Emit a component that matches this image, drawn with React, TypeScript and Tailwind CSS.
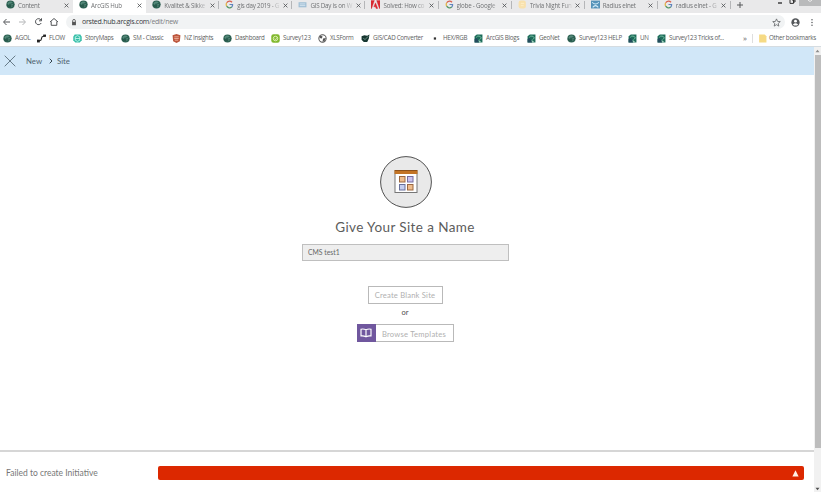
import React from 'react';

type IconKind = 'globe' | 'google' | 'flow' | 'story' | 'nz' | 'survey' | 'xls' | 'cad' | 'dot' | 'blog' | 'adobe' | 'page' | 'trivia' | 'radius' | 'folder';

function SiteIcon({ kind }: { kind: IconKind }) {
  return (
    <svg viewBox="0 0 16 16" className="h-[9px] w-[9px] shrink-0">
      {kind === 'globe' && (
        <g>
          <circle cx="8" cy="8" r="7.3" fill="#2c6152" />
          <path d="M2.5 6C5 2 9 2 12 4L9 6 6 6 5 9ZM9 8L13 7 12 11 9 13Z" fill="#55897a" />
          <path d="M1 9.5C6 12 11 11 15 8" stroke="#204b41" strokeWidth="1" fill="none" />
        </g>
      )}
      {kind === 'google' && (
        <g fill="none" strokeWidth="2.2">
          <path d="M12.5 4A5.7 5.7 0 0 0 3 5" stroke="#d9604f" />
          <path d="M3 5A6 6 0 0 0 3 11" stroke="#e3b244" />
          <path d="M3 11A6 6 0 0 0 12 12.5" stroke="#559767" />
          <path d="M12 12.5A6 6 0 0 0 13.5 8H8" stroke="#5f83bd" />
        </g>
      )}
      {kind === 'flow' && (
        <g fill="#222">
          <path d="M2 13L7 11 9 5 14 3" fill="none" stroke="#222" strokeWidth="2" />
          <rect x="0" y="10" width="5" height="5" />
          <rect x="11" y="1" width="5" height="4" />
        </g>
      )}
      {kind === 'story' && (
        <g>
          <path d="M3 1H13L15.5 5V11L12 15H4L.5 11V5Z" fill="#35bda7" />
          <path d="M4 5L8 3 12 5V11L8 13 4 11ZM4 8H12" fill="none" stroke="#d9fff5" strokeWidth="1.3" />
        </g>
      )}
      {kind === 'nz' && (
        <g>
          <path d="M1 2L8 0 15 2 14 13 8 16 2 13Z" fill="#bc553c" />
          <path d="M4 5H12M4 8H12M5 11H11" stroke="#f1b49e" strokeWidth="1.5" />
        </g>
      )}
      {kind === 'survey' && (
        <g>
          <rect x=".5" y=".5" width="15" height="15" rx="4" fill="#81b82e" />
          <circle cx="8" cy="8" r="4" fill="none" stroke="#eaf8c9" strokeWidth="1.5" />
          <path d="M6 8L8 10 11 6" fill="none" stroke="#eaf8c9" strokeWidth="1.3" />
        </g>
      )}
      {kind === 'xls' && (
        <g>
          <circle cx="8" cy="8" r="6.5" fill="#fff" stroke="#555" strokeWidth="1.8" />
          <path d="M3 3L8 4 7 8 3 7ZM9 8L14 7 12 12 8 14Z" fill="#555" />
        </g>
      )}
      {kind === 'cad' && (
        <g>
          <path d="M1 4L6 2 11 3 15 1 14 8 11 14 5 14 1 10Z" fill="#173731" />
          <path d="M4 7L7 10 13 4" fill="none" stroke="#8bb0a0" strokeWidth="1.3" />
        </g>
      )}
      {kind === 'dot' && <rect x="5" y="6" width="4" height="4" fill="#333" />}
      {kind === 'blog' && (
        <g>
          <path d="M1 4L5 1H15V15H1Z" fill="#1d6c5a" />
          <path d="M4 6A5 5 0 0 1 13 7L10 10" fill="none" stroke="#79c2a4" strokeWidth="1.6" />
          <path d="M1 9L5 7 9 15H1Z" fill="#234b5d" />
          <path d="M8 10L14 15H9Z" fill="#a5d2c0" />
        </g>
      )}
      {kind === 'adobe' && <path d="M0 1H6L1 15H0ZM10 1H16V15H15ZM8 5L12 15H9L8 12H5Z" fill="#d92831" stroke="#d92831" strokeWidth=".7" />}
      {kind === 'page' && (
        <g>
          <rect x="1" y="4" width="14" height="9" fill="#9fbed4" />
          <path d="M3 7H13M3 10H13" stroke="#e1edf5" strokeWidth="1.4" />
        </g>
      )}
      {kind === 'trivia' && (
        <g>
          <rect x="1" y="1" width="13" height="14" rx="4" fill="#f8e1ad" />
          <path d="M5 6H11M5 10H10" stroke="#fff0c8" strokeWidth="1.5" />
        </g>
      )}
      {kind === 'radius' && (
        <g>
          <rect x="0" y="1" width="16" height="14" fill="#5492b8" />
          <path d="M2 4Q8 10 14 4M3 13Q8 7 13 13" fill="none" stroke="#d4edfa" strokeWidth="1.8" />
        </g>
      )}
      {kind === 'folder' && <path d="M2 1H12L15 4V15H2Z" fill="#f6da84" />}
    </svg>
  );
}

const tabs: { label: string; icon: IconKind; active?: boolean }[] = [
  { label: 'Content', icon: 'globe' },
  { label: 'ArcGIS Hub', icon: 'globe', active: true },
  { label: 'Kvalitet & Sikke', icon: 'globe' },
  { label: 'gis day 2019 - G', icon: 'google' },
  { label: 'GIS Day is on W', icon: 'page' },
  { label: 'Solved: How co', icon: 'adobe' },
  { label: 'globe - Google', icon: 'google' },
  { label: 'Trivia Night Fun', icon: 'trivia' },
  { label: 'Radius elnet', icon: 'radius' },
  { label: 'radius elnet - G', icon: 'google' },
];

const bookmarks: { label: string; icon: IconKind; box: string }[] = [
  { label: 'AGOL', icon: 'globe', box: 'w-[34px]' },
  { label: 'FLOW', icon: 'flow', box: 'w-[36px]' },
  { label: 'StoryMaps', icon: 'story', box: 'w-[48px]' },
  { label: 'SM - Classic', icon: 'globe', box: 'w-[51px]' },
  { label: 'NZ Insights', icon: 'nz', box: 'w-[51px]' },
  { label: 'Dashboard', icon: 'globe', box: 'w-[48px]' },
  { label: 'Survey123', icon: 'survey', box: 'w-[47px]' },
  { label: 'XLSForm', icon: 'xls', box: 'w-[43px]' },
  { label: 'GIS/CAD Converter', icon: 'cad', box: 'w-[70px]' },
  { label: 'HEX/RGB', icon: 'dot', box: 'w-[43px]' },
  { label: 'ArcGIS Blogs', icon: 'blog', box: 'w-[53px]' },
  { label: 'GeoNet', icon: 'blog', box: 'w-[40px]' },
  { label: 'Survey123 HELP', icon: 'globe', box: 'w-[61px]' },
  { label: 'UN', icon: 'blog', box: 'w-[29px]' },
  { label: 'Survey123 Tricks of...', icon: 'blog', box: 'w-[86px]' },
];

function TabStrip() {
  return (
    <div className="flex h-[13px] bg-[#e9e9ea] text-[6.2px] leading-[11px] text-[#707274]">
      {tabs.map((tab, i) => (
        <div key={i} className={`flex h-full w-[73.1px] shrink-0 pl-[6px] ${tab.active ? 'bg-white' : ''}`}>
          <SiteIcon kind={tab.icon} />
          <span className="ml-[3px] w-[44px] whitespace-nowrap tracking-[-0.2px] [mask-image:linear-gradient(to_right,black_75%,transparent)]">
            {tab.label}
          </span>
          <svg viewBox="0 0 6 6" className="ml-[1.5px] mt-[2.5px] h-[5px] w-[5px] shrink-0">
            <path d="M.7.7L5.3 5.3M5.3.7L.7 5.3" stroke="#515356" strokeWidth="1" />
          </svg>
          {i > 1 && <span className="ml-auto mt-px h-[8px] w-px bg-[#b5b6b8]" />}
        </div>
      ))}
      <svg viewBox="0 0 8 8" className="ml-[5px] mt-[1px] h-[8px] w-[8px]">
        <path d="M4 1V7M1 4H7" stroke="#56585a" strokeWidth="1" />
      </svg>
      <svg viewBox="0 0 46 7" className="ml-auto h-[7px] w-[46px]">
        <path d="M3 3H7" stroke="#333" strokeWidth="1.4" />
        <path d="M15 0V3.4H18.5V0M17 0H20V2H18.5" fill="none" stroke="#333" strokeWidth="1" />
        <rect x="24" width="22" height="6" fill="#b9babb" />
        <path d="M33 0L35 1.5L37 0" fill="none" stroke="#eee" />
      </svg>
    </div>
  );
}

function AddressRow() {
  return (
    <div className="flex h-[17px] items-center bg-white pt-[1px]">
      <svg viewBox="0 0 64 14" className="h-[14px] w-[64px]" fill="none" stroke="#505356" strokeWidth="1">
        <path d="M10 7H4M6.5 4L3.5 7L6.5 10" />
        <path d="M19 7H25M22.5 4L25.5 7L22.5 10" stroke="#b3b5b7" />
        <path d="M41 5A3 3 0 1 0 41.2 8M41.5 3.3V5.8H39" />
        <path d="M50 7L54 3.5L58 7M51.2 6.5V10.3H56.8V6.5" />
      </svg>
      <div className="ml-[2px] flex h-[14px] w-[719px] items-center rounded-[7px] bg-[#f1f3f4] pl-[5px]">
        <svg viewBox="0 0 6 8" className="h-[7px] w-[6px]">
          <path d="M1.5 3.5V2A1.5 1.5 0 0 1 4.5 2V3.5" fill="none" stroke="#555" />
          <rect x=".8" y="3.3" width="4.4" height="3.8" fill="#555" />
        </svg>
        <span className="ml-[5px] text-[7px] leading-[12px] tracking-[-0.26px] text-[#36393c]">
          orsted.hub.arcgis.com<span className="text-[#7d8083]">/edit/new</span>
        </span>
        <svg viewBox="0 0 10 10" className="ml-auto mr-[4px] h-[9px] w-[9px]">
          <path d="M5 1L6.2 3.8L9.2 4L6.9 6L7.6 9L5 7.4L2.4 9L3.1 6L.8 4L3.8 3.8Z" fill="none" stroke="#606366" strokeWidth=".9" />
        </svg>
      </div>
      <svg viewBox="0 0 10 10" className="ml-[6px] h-[9px] w-[9px]">
        <circle cx="5" cy="5" r="4.6" fill="#55585b" />
        <circle cx="5" cy="3.5" r="1.6" fill="#fff" />
        <path d="M2 7.4Q5 4.5 8 7.4Q5 9.5 2 7.4" fill="#fff" />
      </svg>
      <svg viewBox="0 0 4 10" className="ml-[10px] h-[9px] w-[4px]" fill="#55585b">
        <circle cx="2" cy="2" r=".8" /><circle cx="2" cy="5" r=".8" /><circle cx="2" cy="8" r=".8" />
      </svg>
    </div>
  );
}

function BookmarkBar() {
  return (
    <div className="flex h-[17px] items-center whitespace-nowrap border-b border-[#d5dce1] bg-white pl-[3px] text-[6.2px] leading-[10px] tracking-[-0.26px] text-[#5c5e60]">
      {bookmarks.map((b) => (
        <div key={b.label} className={`flex shrink-0 items-center gap-[3px] ${b.box}`}>
          <SiteIcon kind={b.icon} />
          <span>{b.label}</span>
        </div>
      ))}
      <span className="w-[9px] pb-px text-[8px]">»</span>
      <span className="mr-[5px] h-[9px] w-px bg-[#dedede]" />
      <SiteIcon kind="folder" />
      <span className="ml-[2px]">Other bookmarks</span>
    </div>
  );
}

function SiteBadge() {
  return (
    <svg viewBox="0 0 54 54" className="h-[54px] w-[54px]">
      <circle cx="27" cy="27" r="25.4" fill="#e9e9e9" stroke="#515151" strokeWidth="1" />
      <rect x="16" y="15.5" width="22" height="22" fill="#fff" stroke="#777" strokeWidth="1" />
      <rect x="15.5" y="15" width="23" height="4" fill="#c37425" />
      <path d="M16 15.5H38" stroke="#804818" strokeWidth=".8" />
      <g strokeWidth="1">
        <rect x="20.5" y="21.5" width="5.5" height="5.5" fill="#efbd8d" stroke="#9b6841" />
        <rect x="28.5" y="21.5" width="5.5" height="5.5" fill="#c9c2ef" stroke="#746d9e" />
        <rect x="20.5" y="29.5" width="5.5" height="5.5" fill="#c5cff0" stroke="#68719c" />
        <rect x="28.5" y="29.5" width="5.5" height="5.5" fill="#efbd8d" stroke="#9b6841" />
      </g>
    </svg>
  );
}

export default function App() {
  return (
    <div className="flex h-[492px] w-[821px] flex-col overflow-hidden bg-white font-['Open_Sans',sans-serif]">
      <TabStrip />
      <AddressRow />
      <BookmarkBar />
      <div className="flex min-h-0 flex-1 font-['Lato',sans-serif]">
        <main className="flex w-[814px] flex-col">
          <nav className="flex h-[28px] shrink-0 items-center bg-[#d1e7f8] pl-[4px] text-[7.8px] text-[#4f626e]">
            <svg viewBox="0 0 12 12" className="h-[12px] w-[12px]">
              <path d="M.7.7L11.3 11.3M11.3.7L.7 11.3" stroke="#4c5f6b" strokeWidth=".8" />
            </svg>
            <span className="ml-[10px] w-[17px] pt-[2px]">New</span>
            <svg viewBox="0 0 4 6" className="ml-[6px] h-[6px] w-[4px]">
              <path d="M.7.7L3 3L.7 5.3" fill="none" stroke="#34444e" strokeWidth="1" />
            </svg>
            <span className="ml-[4px] pt-[2px]">Site</span>
          </nav>
          <section className="flex min-h-0 flex-1 flex-col items-center pt-[80px] text-[#505050]">
            <div className="pr-[3px]"><SiteBadge /></div>
            <h1 className="mt-[8px] mr-[4px] text-[13.5px] leading-[20px] tracking-[0.4px] text-[#5c5c5c]">Give Your Site a Name</h1>
            <div className="mr-[3px] mt-[7px] flex h-[17px] w-[207px] items-center border border-[#bfbfbf] bg-[#eeeeee] pl-[5px] text-[6.8px] text-[#666]">CMS test1</div>
            <button className="mr-[4px] mt-[25px] h-[18px] w-[75px] border border-[#b9b9b9] text-[7.6px] leading-[17px] tracking-[0.2px] text-[#b0b0b0]">Create Blank Site</button>
            <span className="mr-[4px] mt-[3px] text-[7.5px] leading-[11px]">or</span>
            <div className="mr-[4px] mt-[6px] flex h-[18px] w-[97px] border border-[#b9b9b9] text-[7.6px] text-[#b0b0b0]">
              <span className="-my-px -ml-px flex w-[19px] shrink-0 items-center justify-center bg-[#70579e]">
                <svg viewBox="0 0 14 12" className="h-[10px] w-[12px]" fill="none" stroke="#fff" strokeWidth="1.4">
                  <path d="M7 2Q4 .8 1 1.5V9.5Q4 9 7 10.5Q10 9 13 9.5V1.5Q10 .8 7 2V10.5" />
                </svg>
              </span>
              <button className="flex-1 whitespace-nowrap pt-px leading-[16px] tracking-[0.25px]">Browse Templates</button>
            </div>
          </section>
          <footer className="flex h-[42px] shrink-0 items-center border-t-2 border-[#d6d6d6] pl-[6px] pt-[2px] text-[8.5px] text-[#777]">
            <span className="w-[152px] pt-px">Failed to create Initiative</span>
            <div className="flex h-[14px] w-[646px] items-center justify-end rounded-[2px] bg-[#dc2800] pr-[5px]">
              <svg viewBox="0 0 8 8" className="h-[7px] w-[7px]"><path d="M4 .4L7.6 7.4H.4Z" fill="#fff0e5" /></svg>
            </div>
          </footer>
        </main>
        <aside className="flex w-[7px] flex-col items-center justify-between bg-[#f1f1f1]">
          <div className="flex w-full flex-col items-center">
            <svg viewBox="0 0 5 5" className="my-[2px] h-[4px] w-[5px]"><path d="M0 4L2.5 1L5 4Z" fill="#8c8c8c" /></svg>
            <div className="h-[393px] w-[6px] bg-[#bdbdbd]" />
          </div>
          <svg viewBox="0 0 5 5" className="mb-px h-[4px] w-[5px]"><path d="M0 1L2.5 4L5 1Z" fill="#505050" /></svg>
        </aside>
      </div>
    </div>
  );
}
